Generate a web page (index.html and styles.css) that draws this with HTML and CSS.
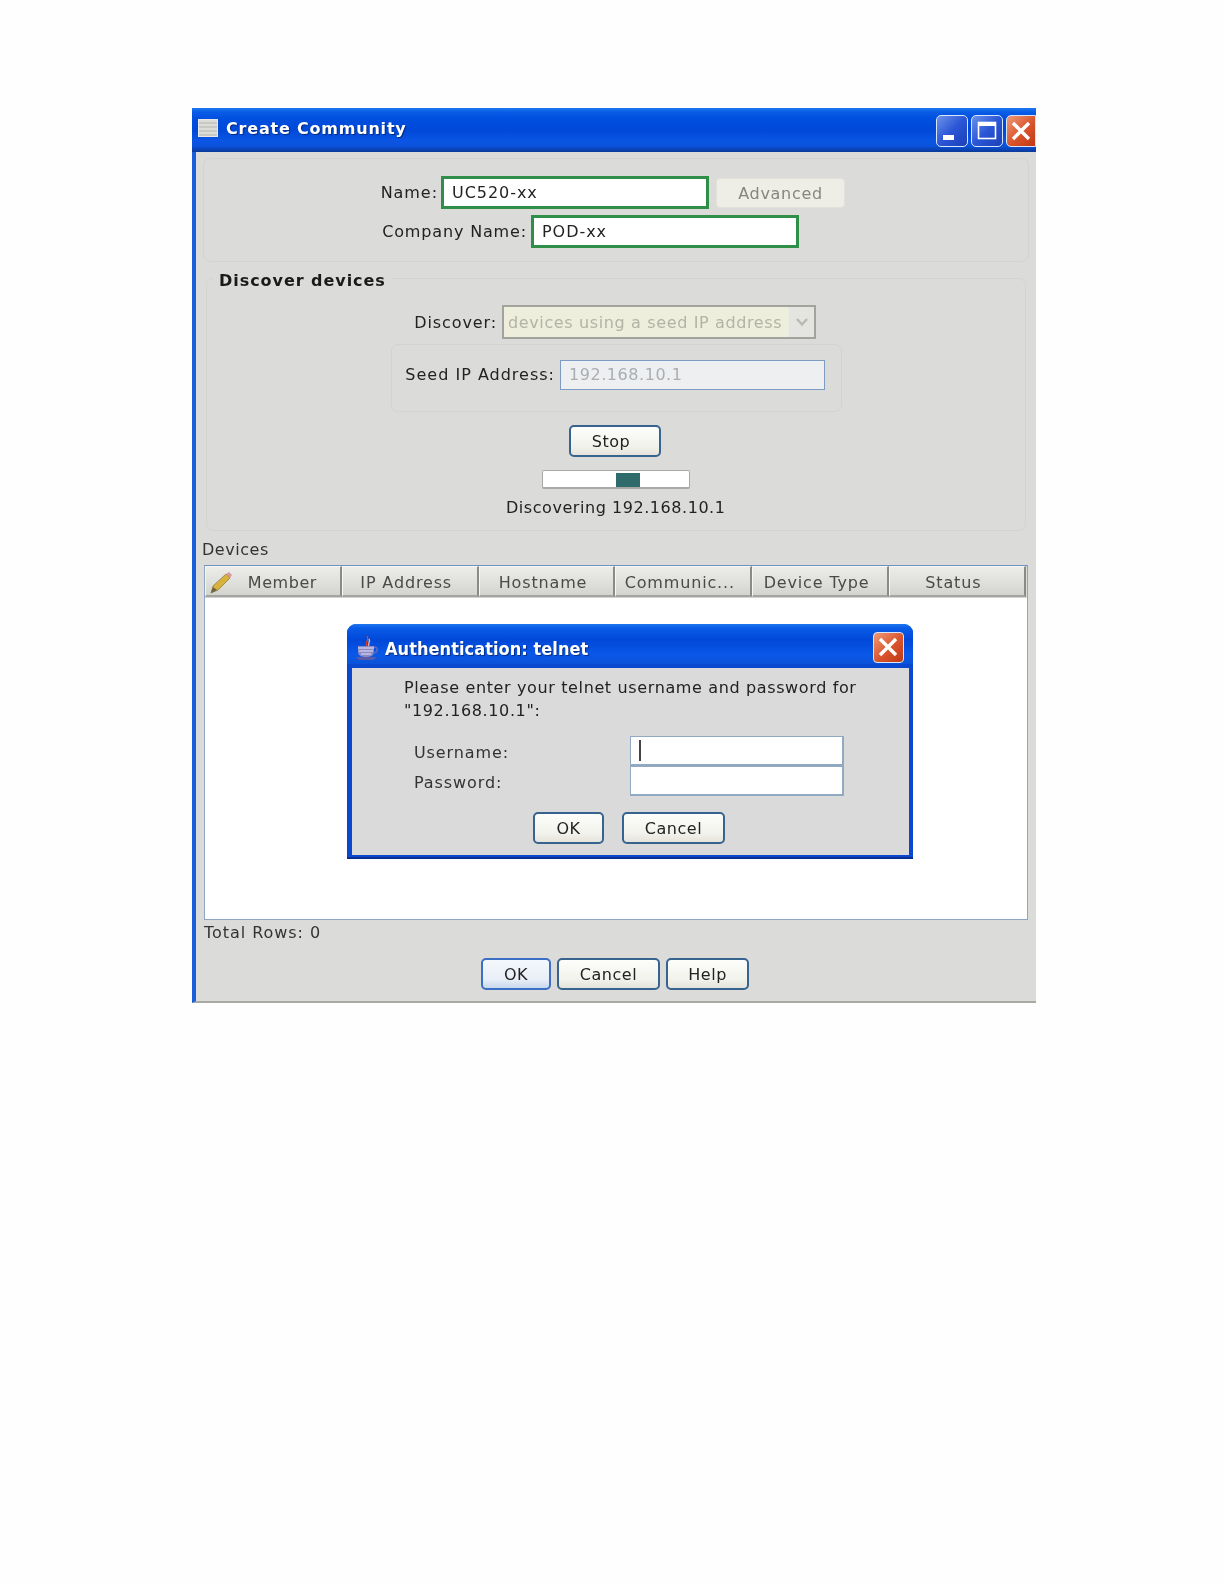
FILE: index.html
```html
<!DOCTYPE html>
<html lang="en">
<head>
<meta charset="utf-8">
<title>Create Community</title>
<link rel="stylesheet" href="styles.css">
</head>
<body>
<div class="win">
  <div class="titlebar">
    <span class="app-icon"></span>
    <span class="title-text">Create Community</span>
    <div class="win-btns">
      <span class="wbtn"><svg width="32" height="32" viewBox="0 0 32 32"><rect x="7" y="20" width="11" height="5" fill="#fff"/></svg></span>
      <span class="wbtn"><svg width="32" height="32" viewBox="0 0 32 32"><rect x="7.500" y="7.500" width="17" height="16" fill="none" stroke="#fff" stroke-width="1.600"/><rect x="7" y="7" width="18" height="4" fill="#fff"/></svg></span>
      <span class="wbtn wclose"><svg width="30" height="32" viewBox="0 0 30 32"><path d="M7 8 L23 24 M23 8 L7 24" stroke="#fff" stroke-width="3.400"/></svg></span>
    </div>
  </div>
  <div class="content">
    <section class="panel-top">
      <div class="row row-name">
        <label class="lbl lbl-name">Name:</label>
        <div class="field field-green">UC520-xx</div>
        <div class="btn-adv">Advanced</div>
      </div>
      <div class="row row-company">
        <label class="lbl lbl-company">Company Name:</label>
        <div class="field field-green">POD-xx</div>
      </div>
    </section>
    <section class="group">
      <h2 class="legend">Discover devices</h2>
      <div class="row row-discover">
        <label class="lbl lbl-discover">Discover:</label>
        <div class="combo">
          <span class="combo-text">devices using a seed IP address</span>
          <span class="combo-arrow"><svg width="14" height="10" viewBox="0 0 14 10"><path d="M2 2 L7 7.500 L12 2" fill="none" stroke="#b9b9b0" stroke-width="2.400"/></svg></span>
        </div>
      </div>
      <div class="seed">
        <label class="lbl lbl-seed">Seed IP Address:</label>
        <div class="field-disabled">192.168.10.1</div>
      </div>
      <div class="center-row stop-row"><div class="btn btn-stop">Stop</div></div>
      <div class="center-row progress-row"><div class="progress"><span class="progress-block"></span></div></div>
      <div class="status">Discovering 192.168.10.1</div>
    </section>
    <div class="devices-label">Devices</div>
    <div class="table">
      <div class="thead">
        <div class="th th-member">
          <svg class="pencil" width="24" height="24" viewBox="0 0 24 24"><path d="M1 22 L3 15 L16 3 L20 7 L8 19 Z" fill="#d9b23c" stroke="#8d7f45" stroke-width=".8"/><path d="M16 3 L20 7 L22 4 L19 1 Z" fill="#d99a9a"/><path d="M1 22 L3 16 L7 19 Z" fill="#6b6246"/></svg>
          <span class="th-member-text">Member</span>
        </div>
        <div class="th">IP Address</div>
        <div class="th">Hostname</div>
        <div class="th">Communic...</div>
        <div class="th">Device Type</div>
        <div class="th">Status</div>
      </div>
      <div class="tbody"></div>
    </div>
    <div class="total">Total Rows: 0</div>
    <div class="actions">
      <div class="btn btn-ok btn-default">OK</div>
      <div class="btn btn-cancel">Cancel</div>
      <div class="btn btn-help">Help</div>
    </div>
  </div>

  <div class="dialog">
    <div class="dlg-title">
      <svg class="java" width="24" height="26" viewBox="0 0 24 26"><path d="M12 1 C15 5 9 7 12 11 C10 8 14 6 12 1 Z" fill="#e0763c" stroke="#d8452a"/><path d="M14 4 C16 7 12 9 14 11" fill="none" stroke="#e8b0a0" stroke-width="1.400"/><path d="M3 11 H19 V17 C19 21 15 22 11 22 C7 22 3 21 3 17 Z" fill="#8a8ac8"/><path d="M3 13 H19 M4 16 H18 M6 19 H16" stroke="#e4e4f4" stroke-width="1"/><path d="M19 12 C24 12 23 18 18 18" fill="none" stroke="#6a6ab0" stroke-width="1.500"/><path d="M1 22 H22 L18 25 H4 Z" fill="#5a5aa8"/></svg>
      <span class="dlg-title-text">Authentication: telnet</span>
      <span class="wbtn wclose dlg-close"><svg width="30" height="30" viewBox="0 0 30 30"><path d="M7 7 L23 23 M23 7 L7 23" stroke="#fff" stroke-width="3.400"/></svg></span>
    </div>
    <div class="dlg-body">
      <p class="dlg-msg">Please enter your telnet username and password for<br>"192.168.10.1":</p>
      <div class="dlg-form">
        <label class="dlg-lbl">Username:</label>
        <div class="dlg-input"><span class="caret"></span></div>
        <label class="dlg-lbl">Password:</label>
        <div class="dlg-input"></div>
      </div>
      <div class="dlg-actions">
        <div class="btn btn-dok">OK</div>
        <div class="btn btn-dcancel">Cancel</div>
      </div>
    </div>
  </div>
</div>
</body>
</html>
```
FILE: styles.css
```css
* { box-sizing: border-box; }
html, body { margin: 0; padding: 0; background: #fefefe; }
body {
  width: 1224px;
  height: 1584px;
  overflow: hidden;
  font-family: "DejaVu Sans", sans-serif;
  font-size: 16px;
  letter-spacing: .55px;
  color: #222;
}
.win {
  position: relative;
  width: 844px;
  height: 895px;
  margin: 108px 0 0 192px;
  display: flex;
  flex-direction: column;
  filter: blur(.35px);
}
.titlebar {
  height: 44px;
  display: flex;
  align-items: center;
  padding-left: 6px;
  background: linear-gradient(#1c7bf0 0, #0a5ce6 4px, #0050e0 10px, #0048d8 22px, #0a55e4 32px, #0b53dc 38px, #0a45bc 41px, #0a3a98 44px);
}
.app-icon {
  width: 20px;
  height: 18px;
  margin-top: -4px;
  background: repeating-linear-gradient(#dcdcd8 0 2px, #c9c9c4 2px 4px);
  border: 1px solid #e8e8e4;
}
.title-text {
  margin-left: 8px;
  margin-top: -3px;
  font-weight: 700;
  font-size: 16px;
  letter-spacing: .8px;
  color: #fff;
  text-shadow: 1px 1px 1px #062a80;
}
.win-btns {
  margin-left: auto;
  display: flex;
  gap: 3px;
  align-items: center;
  padding-top: 1px;
}
.wbtn {
  display: block;
  width: 32px;
  height: 32px;
  border: 1px solid #d8e6fb;
  border-radius: 5px;
  background: linear-gradient(135deg, #6d93ea, #2a56d6 50%, #1c3fb8);
  overflow: hidden;
}
.wbtn svg { display: block; margin: -1px; }
.wclose {
  width: 30px;
  border-radius: 5px 0 0 5px;
  background: linear-gradient(135deg, #ee9a78, #d9542c 55%, #bf3a14);
}
.content {
  height: 851px;
  border-left: 4px solid #1a5fd8;
  border-bottom: 2px solid #a8a8a4;
  background: #dbdcd9;
  padding: 6px 7px 0 7px;
}
.panel-top {
  width: 826px;
  height: 104px;
  border: 1px solid #d3d4d0;
  border-radius: 7px;
  padding-top: 17px;
}
.row { display: flex; align-items: center; }
.lbl { text-align: right; display: block; color: #222; }
.row-name { height: 33px; }
.lbl-name { width: 234px; letter-spacing: .95px; }
.field-green {
  width: 268px;
  height: 33px;
  margin-left: 3px;
  padding: 0 8px;
  line-height: 27px;
  letter-spacing: .95px;
  background: #fff;
  border: 3px solid #2f8f49;
}
.btn-adv {
  width: 129px;
  height: 30px;
  margin-left: 7px;
  text-align: center;
  line-height: 30px;
  letter-spacing: .7px;
  color: #86867f;
  background: #eeeee6;
  border: 1px solid #e2e2da;
  border-radius: 4px;
}
.row-company { margin-top: 6px; height: 33px; }
.lbl-company { width: 323px; letter-spacing: .85px; }
.row-company .field-green { margin-left: 4px; }

.group {
  position: relative;
  width: 820px;
  height: 253px;
  margin: 16px 0 0 3px;
  border: 1px solid #d3d4d0;
  border-radius: 7px;
  padding-top: 26px;
}
.legend {
  position: absolute;
  left: 6px;
  top: -8px;
  margin: 0;
  padding: 0 6px;
  font-size: 16px;
  font-weight: 700;
  letter-spacing: .95px;
  color: #1a1a1a;
  background: #dbdcd9;
}
.row-discover { height: 34px; }
.lbl-discover { width: 290px; letter-spacing: .9px; }
.combo {
  display: flex;
  width: 314px;
  height: 34px;
  margin-left: 5px;
  border: 2px solid #a3a39d;
  background: #eeeedd;
  color: #b3b3a6;
}
.combo-text { flex: 1; min-width: 0; padding-left: 4px; line-height: 31px; letter-spacing: .63px; white-space: nowrap; overflow: hidden; }
.combo-arrow {
  flex: none;
  width: 26px;
  display: flex;
  align-items: center;
  justify-content: center;
  background: #e4e4e1;
  border-left: 1px solid #ecece6;
}
.seed {
  display: flex;
  width: 451px;
  height: 68px;
  margin: 5px 0 0 184px;
  padding-top: 15px;
  border: 1px solid #d3d4d0;
  border-radius: 7px;
}
.lbl-seed { width: 163px; line-height: 30px; letter-spacing: 1px; }
.field-disabled {
  width: 265px;
  height: 30px;
  margin-left: 5px;
  padding-left: 8px;
  line-height: 28px;
  color: #a9aeb2;
  background: #edeff0;
  border: 1px solid #7d9cc4;
}
.center-row { display: flex; }
.stop-row { margin-top: 13px; padding-left: 362px; }
.btn {
  height: 32px;
  text-align: center;
  line-height: 30px;
  color: #222;
  background: linear-gradient(#fdfdfb, #f2f2ec 70%, #e4e4dc);
  border: 2px solid #36648f;
  border-radius: 5px;
}
.btn-stop { width: 92px; padding-right: 8px; }
.progress-row { margin-top: 13px; padding-left: 335px; }
.progress {
  position: relative;
  width: 148px;
  height: 19px;
  background: #fff;
  border: 1px solid #a8a8a4;
  border-bottom-width: 2px;
  border-radius: 2px;
}
.progress-block {
  position: absolute;
  left: 73px;
  top: 2px;
  width: 24px;
  height: 14px;
  background: #2f6b6b;
}
.status { margin: 9px 0 0 299px; line-height: 20px; color: #222; }
.devices-label { margin: 6px 0 0 -1px; height: 28px; line-height: 26px; color: #333; }
.table {
  width: 824px;
  height: 355px;
  margin-left: 1px;
  border: 1px solid #8ea6c4;
  background: #fff;
  border-top: 1px solid #6f93bf;
}
.thead { display: flex; height: 32px; background: #dbdcd9; border-bottom: 1px solid #d3d4d0; }
.th {
  position: relative;
  width: 136.800px;
  padding-right: 7px;
  text-align: center;
  line-height: 32px;
  letter-spacing: .85px;
  color: #4a4a4a;
  background: linear-gradient(#ecece8, #dedfdb 60%, #d3d3cf);
  border: 1px solid #f6f6f3;
  border-right: 2px solid #8b8b86;
  border-bottom: 2px solid #a4a4a0;
  white-space: nowrap;
}
.th-member { padding-left: 26px; letter-spacing: .55px; }
.pencil { position: absolute; left: 4px; top: 4px; }
.total { margin: 2px 0 0 1px; line-height: 22px; letter-spacing: .95px; color: #333; }
.actions { display: flex; margin: 14px 0 0 278px; gap: 6px; }
.btn-ok { width: 70px; }
.btn-default { border-color: #3a6fc4; background: linear-gradient(#f4f8fc, #e8eef6 70%, #c8d8ee); }
.btn-cancel { width: 103px; }
.btn-help { width: 83px; }

.dialog {
  position: absolute;
  left: 155px;
  top: 516px;
  width: 566px;
  height: 235px;
  display: flex;
  flex-direction: column;
  background: #0b48d0;
  border-radius: 9px 9px 0 0;
  box-shadow: inset 0 -2px 0 #0a2f90;
}
.dlg-title {
  position: relative;
  height: 40px;
  flex: none;
  display: flex;
  align-items: center;
  padding-left: 8px;
  border-radius: 9px 9px 0 0;
  background: linear-gradient(#1c78ee 0, #0a5ce8 4px, #0048d8 16px, #0a58e8 30px, #0b52d8 40px);
}
.java { flex: none; margin-top: 7px; }
.dlg-title-text {
  margin-left: 6px;
  margin-top: 8px;
  font-family: "DejaVu Sans Condensed", "DejaVu Sans", sans-serif;
  font-size: 18px;
  font-weight: 700;
  letter-spacing: .05px;
  color: #fff;
  text-shadow: 1px 1px 1px #062a80;
}
.dlg-close {
  position: absolute;
  right: 9px;
  top: 8px;
  width: 31px;
  height: 31px;
  border-radius: 4px;
}
.dlg-body {
  height: 187px;
  margin: 4px 4px 0 5px;
  flex: none;
  background: #dadada;
  padding: 8px 0 0 52px;
}
.dlg-msg { margin: 0; line-height: 23px; letter-spacing: .63px; color: #222; }
.dlg-form {
  display: grid;
  grid-template-columns: 216px 214px;
  grid-auto-rows: 30px;
  row-gap: 0;
  margin: 14px 0 0 10px;
}
.dlg-lbl { line-height: 34px; letter-spacing: .9px; color: #333; }
.dlg-input {
  position: relative;
  background: #fff;
  border: 2px solid #92a9c4;
  border-width: 1px 2px 2px 1px;
}
.caret {
  position: absolute;
  left: 8px;
  top: 3px;
  width: 2px;
  height: 21px;
  background: #444;
}
.dlg-actions { display: flex; gap: 18px; margin: 16px 0 0 129px; }
.btn-dok { width: 71px; }
.btn-dcancel { width: 103px; }
```
